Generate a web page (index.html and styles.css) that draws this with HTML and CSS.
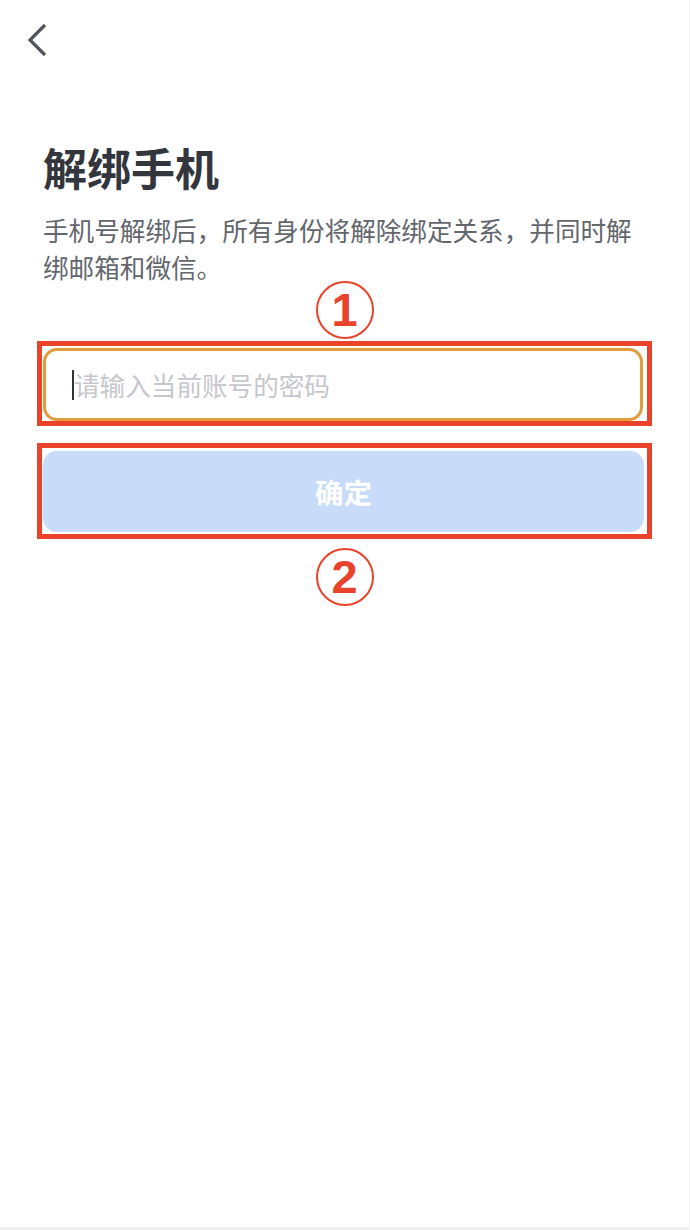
FILE: index.html
```html
<!DOCTYPE html>
<html lang="zh-CN">
<head>
  <meta charset="UTF-8" />
  <meta name="viewport" content="width=device-width, initial-scale=1.0"/>
  <title>解绑手机</title>
  <link rel="stylesheet" href="styles.css">
</head>
<body>
  <div class="screen">
    <header class="nav">
      <button class="back" aria-label="返回">
        <svg width="22" height="36" viewBox="0 0 22 36">
          <path d="M18 3 L3 18 L18 33" fill="none" stroke="#50545b" stroke-width="3.2" />
        </svg>
      </button>
    </header>

    <main class="content">
      <h1 class="title">解绑手机</h1>
      <p class="desc">手机号解绑后，所有身份将解除绑定关系，并同时解绑邮箱和微信。</p>

      <div class="step"><div class="step-ring"><span class="step-num">1</span></div></div>

      <div class="mark mark-input">
        <div class="field">
          <span class="caret"></span>
          <span class="placeholder">请输入当前账号的密码</span>
        </div>
      </div>

      <div class="mark mark-btn">
        <button class="submit">确定</button>
      </div>

      <div class="step step-two"><div class="step-ring"><span class="step-num">2</span></div></div>
    </main>
  </div>
</body>
</html>
```

FILE: styles.css
```css
body {
  margin: 0;
  background-color: #efefef;
  font-family: "Noto Sans CJK SC", "Noto Sans", sans-serif;
}
.screen {
  width: 689px;
  height: 1227px;
  background-color: #fff;
  overflow: hidden;
}
.nav {
  height: 80px;
  padding: 22px 0 0 27px;
  box-sizing: border-box;
}
.back {
  display: block;
  padding: 0;
  border: none;
  background: none;
}
.back svg {
  display: block;
}
.content {
  padding: 0 37px;
}
.title {
  margin: 57px 0 0 6px;
  font-size: 44px;
  line-height: 60px;
  font-weight: 700;
  color: #33363c;
}
.desc {
  margin: 14px 0 0 6px;
  font-size: 25.6px;
  line-height: 37px;
  color: #62666d;
}
.step {
  display: flex;
  justify-content: center;
  margin-top: -4px;
}
.step-two {
  margin-top: 9px;
}
.step-ring {
  display: flex;
  align-items: center;
  justify-content: center;
  width: 58px;
  height: 58px;
  box-sizing: border-box;
  border: 2px solid #e9442b;
  border-radius: 50%;
}
.step-num {
  font-family: "Liberation Sans", Arial, sans-serif;
  font-weight: 700;
  font-size: 47px;
  line-height: 34px;
  color: #e9442b;
}
.mark {
  border: 5px solid #e9442b;
}
.mark-input {
  margin-top: 2px;
  padding: 2px 4px 0 1px;
}
.mark-btn {
  margin-top: 17px;
  padding: 3px 3px 2px 1px;
}
.field {
  display: flex;
  align-items: center;
  height: 73px;
  box-sizing: border-box;
  padding-left: 26px;
  border: 3px solid #e39c3c;
  border-radius: 14px;
}
.caret {
  width: 2px;
  height: 30px;
  background-color: #333;
}
.placeholder {
  font-size: 25.6px;
  color: #c5c7cc;
}
.submit {
  display: block;
  width: 100%;
  height: 81px;
  border: none;
  border-radius: 14px;
  background-color: #c8dcfa;
  color: #fff;
  font-family: inherit;
  font-size: 28.5px;
  font-weight: 700;
}
```
